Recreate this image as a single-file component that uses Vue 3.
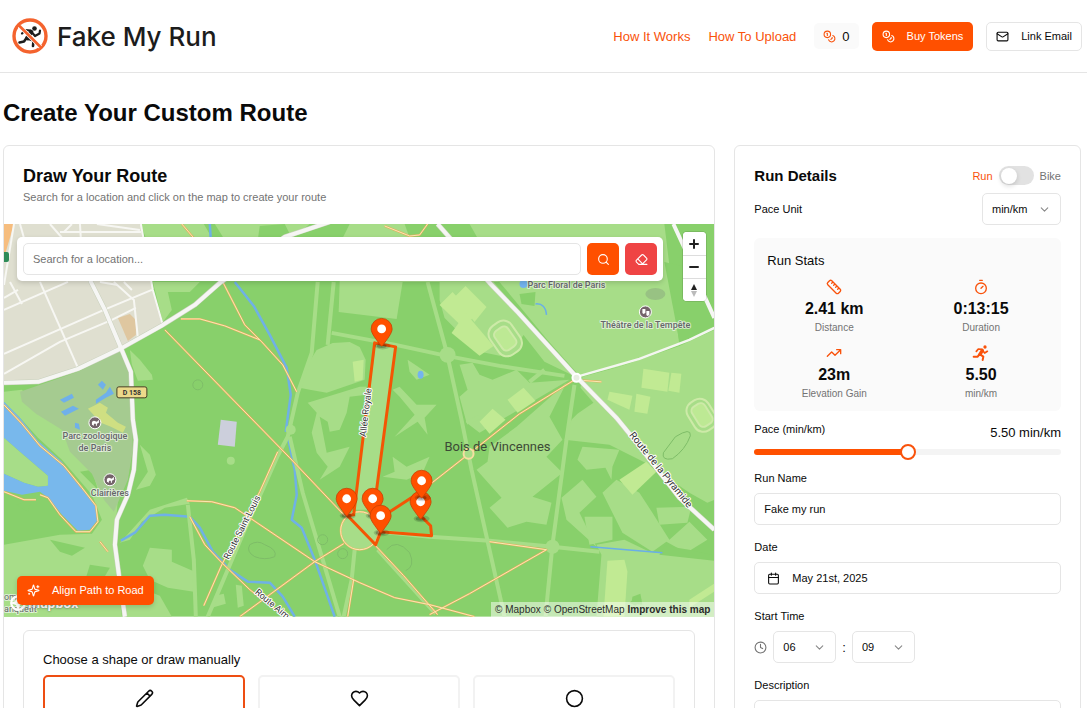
<script setup>
import { ref, computed } from "vue";

const search = ref("");
const isBike = ref(false);
const paceUnit = ref("min/km");
const pace = ref(5.5);
const runName = ref("Fake my run");
const hour = ref("06");
const minute = ref("09");
const description = ref("");
const shape = ref("pencil");

const paceMin = 3;
const paceMax = 8;
const paceFill = computed(() => ((pace.value - paceMin) / (paceMax - paceMin)) * 100 + "%");

const shapes = ["pencil", "heart", "circle"];

const stats = [
  { icon: "ruler", value: "2.41 km", label: "Distance" },
  { icon: "timer", value: "0:13:15", label: "Duration" },
  { icon: "trend", value: "23m", label: "Elevation Gain" },
  { icon: "runner", value: "5.50", label: "min/km" },
];

// waypoints, at the centre of each pin head
const pins = [
  [382, 329],
  [421, 502],
  [422, 481],
  [347, 499],
  [373, 499],
  [381, 516],
];

const parks = [
  "141,224 204,224 211,236 222,250 150,250",
  "153,282 200,282 190,292 168,292 172,310 163,322",
  "215,224 260,224 310,224 290,240 225,240",
  "350,224 445,224 500,282 340,282 342,240",
  "340,282 403,282 397,319 339,312",
  "450,224 665,224 672,282 680,345 660,351 620,367 580,376 548,340 505,288",
  "440,282 494,282 574,376 545,362 524,335 514,350 500,356 482,352 462,335 445,318 440,300",
  "130,350 140,360 152,375 153,380 138,381 132,365",
  "317,350 333,343 350,342 360,347 366,360 365,380 327,393 310,390 300,388 307,366",
  "376,345 395,347 375,510 355,510",
  "308,403 360,387 367,387 367,395 350,397 347,413 340,430 330,432 328,422 320,417 322,427 327,453 350,447 340,467 320,480 328,467 317,453 312,433 317,413",
  "393,390 400,387 417,405 437,405 425,418 428,435 418,422 395,437 415,415 400,397",
  "393,457 407,467 430,457 423,473 407,480 383,477 395,472",
  "408,360 417,366 430,375 417,380 410,372",
  "4,392 22,390 40,412 75,440 100,470 118,500 114,545 122,617 4,617 4,545 60,535 92,534 102,520 92,495 62,460 38,438 20,418 4,402",
  "4,438 20,452 48,476 48,486 38,487 24,483 4,474",
  "140,445 150,455 156,475 150,486 136,490 148,472",
  "120,543 150,510 187,498 190,504 165,508 142,522 130,540",
  "150,548 172,550 172,562 195,572 194,592 168,588 150,580 143,566",
  "125,590 140,588 160,596 172,617 126,617",
  "215,596 224,594 226,604 212,608",
  "236,585 242,586 244,606 238,608",
  "460,365 473,363 480,375 493,380 517,370 530,383 570,380 480,433 467,423 460,397 468,390",
  "490,447 517,427 567,383 550,417 563,440 547,457 563,473 533,497 552,503 547,525 527,522 508,528 490,508 502,498 477,470 488,462",
  "583,377 620,367 680,346 715,330 715,500 708,503 690,493 650,465 610,445 565,440 572,420 578,414 594,403 581,388",
  "583,447 620,450 613,467 612,480 606,468 587,470 578,460",
  "562,498 583,480 597,497 580,513 597,547 567,520",
  "585,517 613,517 613,540 590,545",
  "603,493 617,480 640,493 653,513 670,540 690,522 708,540 687,553 667,542 653,552 623,533 613,513",
  "657,508 692,507 688,523 660,525",
  "597,545 625,540 650,552 715,560 715,617 597,617 602,555",
];

const woods = [
  "260,226 285,224 292,238 258,240",
  "405,224 470,224 478,238 410,238",
  "665,262 700,270 715,318 715,330 680,341",
  "520,294 536,292 535,306 522,304",
  "50,540 85,548 72,556 60,552",
  "80,472 92,470 98,490 88,480",
  "90,565 110,568 100,585 86,578",
  "665,546 690,550 715,556 715,561 660,555",
  "640,595 642,600 636,606 630,603",
  "633,597 641,594 643,605 632,604",
  "16,505 32,500 28,512",
];

const pitches = [
  "466,286 487,307 475,322 455,297",
  "453,292 475,316 464,328 440,305",
  "466,313 494,346 480,356 452,333",
  "353,362 364,360 363,380 355,382",
  "524,388 536,401 518,413 508,400",
  "493,409 506,420 490,434 480,422",
  "644,369 670,373 668,392 642,388",
  "672,373 682,374 680,393 669,391",
  "610,392 633,396 630,410 608,400",
  "637,394 651,397 648,414 635,412",
  "620,480 647,462 657,472 633,495",
  "608,561 625,560 628,572 625,617 604,617",
  "690,600 715,584 715,592 690,608",
];

const streets = [
  "14,224 4,285",
  "20,224 24,238",
  "50,224 64,240",
  "64,232 72,224",
  "60,232 141,232",
  "80,224 81,240",
  "97,224 140,230",
  "4,310 68,282",
  "4,298 18,290",
  "10,282 22,304",
  "40,282 78,368",
  "4,354 104,310 152,290",
  "4,374 60,342 112,320 136,308",
  "100,282 118,285",
  "114,282 134,300 138,338",
  "124,282 132,290",
  "141,224 153,290 163,325",
];

const tracks = [
  "165,330 290,458 345,516",
  "181,319 200,319 225,326 260,340",
  "223,282 245,325 262,342 283,365 297,392",
  "187,501 212,502 235,508 315,562 360,583 395,598 430,605 475,617",
  "278,452 260,492 222,565 204,606",
  "190,517 205,545 222,563 250,590 285,617",
  "240,617 315,562 344,544",
  "374,544 404,576 438,615",
  "430,615 470,594 547,550 490,542",
  "421,492 472,452 520,414 575,380 602,382",
  "354,580 348,617",
  "4,405 22,424 40,446 64,466 82,488 96,506 98,522 90,532 76,532 60,515 48,498 40,495",
  "4,492 24,500 36,500",
  "100,542 108,552",
  "182,224 194,238",
  "385,226 410,236 420,235 428,224",
];

const trails = [
  "428,282 447,352 462,420 472,470 505,617",
  "332,333 396,345 447,356 500,366 565,376",
  "530,382 545,370",
  "467,423 480,417",
  "575,385 567,440 553,545 546,617",
  "382,532 430,537 490,541 553,547 600,552",
  "318,282 312,353 298,393 288,437 278,456 245,530 208,617",
  "334,282 328,345",
  "290,437 303,493 340,617",
  "355,550 352,580 344,617",
  "378,550 436,614",
  "188,505 194,560 196,617",
];

const waters = [
  "210,224 211,240",
  "235,282 254,306 270,335 287,368 291,395 286,432",
  "288,437 295,470 297,495 292,520 302,528 315,560 335,617",
  "121,541 135,533 150,516 165,515 190,517 200,528 213,552 230,570 248,582 270,583 283,597 295,617",
];
</script>

<template>
  <div class="page">
    <header class="header">
      <a href="#" class="brand">
        <svg class="brand-mark" viewBox="0 0 36 36" aria-hidden="true">
          <g fill="none" stroke="#1c1c1c" stroke-linecap="round" stroke-linejoin="round">
            <circle cx="22.5" cy="10.5" r="2.3" fill="#1c1c1c" stroke="none" />
            <path d="M19 14l-3.5 6" stroke-width="4.6" />
            <path d="M18 12.5l-4.5-.5-3.5 3.5M20 14.5l3 3.5 4.500-2.500.5-3" stroke-width="2.200" />
            <path d="M15.500 20.500l6 2-.5 5.500M14.500 20l-2.500 3.500-4.500 1" stroke-width="2.600" />
          </g>
          <circle cx="18" cy="18" r="16" fill="none" stroke="#f4632e" stroke-width="3.4" />
          <path d="M7.500 8l21 21" stroke="#fff" stroke-width="4.200" />
          <path d="M6.500 7l23 23" stroke="#f4632e" stroke-width="2.600" />
        </svg>
        <span class="brand-name">Fake My Run</span>
      </a>
      <nav class="nav">
        <a href="#how">How It Works</a>
        <a href="#upload">How To Upload</a>
        <div class="tokens">
          <svg class="icon" viewBox="0 0 24 24"><circle cx="8" cy="8" r="6" /><path d="M18.090 10.370A6 6 0 1 1 10.340 18M7 6h1v4M16.710 13.880l.7.710-2.820 2.820" /></svg>
          <span>0</span>
        </div>
        <button class="btn btn-primary">
          <svg class="icon" viewBox="0 0 24 24"><circle cx="8" cy="8" r="6" /><path d="M18.090 10.370A6 6 0 1 1 10.340 18M7 6h1v4M16.710 13.880l.7.710-2.820 2.820" /></svg>
          Buy Tokens
        </button>
        <button class="btn btn-outline">
          <svg class="icon" viewBox="0 0 24 24"><rect x="2" y="4" width="20" height="16" rx="2" /><path d="m22 7-8.970 5.700a1.940 1.940 0 0 1-2.060 0L2 7" /></svg>
          Link Email
        </button>
      </nav>
    </header>

    <main class="main">
      <h1>Create Your Custom Route</h1>

      <div class="columns">
        <section class="card route-card">
          <div class="card-head">
            <h2>Draw Your Route</h2>
            <p>Search for a location and click on the map to create your route</p>
          </div>

          <div class="map">
            <svg class="map-canvas" viewBox="4 224 711 393" preserveAspectRatio="xMidYMid slice">
              <rect x="4" y="224" width="711" height="393" fill="#88d06b" />
              <polygon v-for="p in parks" :key="p" :points="p" fill="#a7dd88" />
              <polygon v-for="p in woods" :key="p" :points="p" fill="#88d06b" />
              <polygon points="20,392 78,372 120,350 131,378 133,450 128,480 114,512 104,500 92,474 70,452 62,430 36,414 22,402" fill="#a5cb90" />
              <polygon v-for="p in pitches" :key="p" :points="p" fill="#c1ea93" />
              <polygon points="4,224 141,224 153,290 163,325 122,348 78,369 38,382 4,383" fill="#dfdfd0" />
              <polygon points="4,224 14,224 4,258" fill="#f6bd7e" />
              <polygon points="118,318 130,314 136,320 136,335 128,341" fill="#dfc7a0" />
              <polygon points="221,420 237,422 235,447 218,445" fill="#cccfdc" />
              <ellipse cx="656" cy="294" rx="10" ry="6" fill="#98c283" />

              <!-- lake, ponds and streams -->
              <path d="M4 402L20 418 38 441 62 462 80 486 95 505 98 520 90 530 78 531 62 515 48 498 40 492 22 495 4 491V474L24 483 38 487 48 486 48 476 20 452 4 438Z" fill="#78b8ec" />
              <path d="M98 385l4-4 4 4-3 5zM60 400l12-6 2 4-10 5zM61 412l12-6 6 3-14 7zM96 400l10-7 4-6 4 7-8 4-10 6zM75 423l4 1 1 6-5-2z" fill="#6fb0ea" />
              <path d="M88 409l12-6 8 5-2 5 12 10 8 4-3 6-12-6-10-4z" fill="#cfdf82" />
              <ellipse cx="421" cy="375" rx="3" ry="4" fill="#74b4ef" />
              <circle cx="524" cy="284" r="4" fill="#74b4ef" />
              <path d="M536 304q10-1 11 11M591 547l72 6" fill="none" stroke="#69aee8" stroke-width="1.500" />
              <polyline v-for="p in waters" :key="p" :points="p" class="water" />

              <polyline v-for="p in trails" :key="p" :points="p" class="trail" />
              <circle cx="553" cy="547" r="7" fill="#a7dd88" />
              <circle cx="448" cy="355" r="8" fill="#a7dd88" />
              <circle cx="291" cy="430" r="5" fill="#a7dd88" />
              <circle cx="231" cy="461" r="4" fill="#a7dd88" />
              <g fill="none" stroke="#cdeaa8" stroke-width="2">
                <rect x="493" y="321" width="26" height="35" rx="10" transform="rotate(-35 506 339)" fill="#a7dd88" />
                <rect x="498" y="327" width="16" height="23" rx="5" transform="rotate(-35 506 339)" fill="#bde994" />
                <rect x="690" y="399" width="24" height="33" rx="10" transform="rotate(-32 702 415)" />
                <rect x="695" y="404" width="15" height="23" rx="5" transform="rotate(-32 702 415)" fill="#bde994" />
              </g>
              <g fill="none" stroke="#7dbd67" stroke-width="1">
                <circle cx="198" cy="385" r="5" />
                <circle cx="323" cy="540" r="5" />
                <circle cx="343" cy="554" r="5" />
                <path d="M250 545q8-5 15 0 13 5 10 12-10 4-20 0-9-5-5-12zM387 550q10-12 23 3 6 14-4 18" />
                <path d="M676 437q16-10 15-1-5 14-18 23-11 2-9-6z" />
              </g>

              <!-- roads -->
              <circle cx="360" cy="531" r="19" fill="#a7dd88" stroke="#e8b765" stroke-width="2" />
              <circle cx="360" cy="531" r="19" fill="none" stroke="#fbe9b4" stroke-width="1" />
              <polyline v-for="p in tracks" :key="p" :points="p" class="track-edge" />
              <polyline v-for="p in tracks" :key="p + 'c'" :points="p" class="track" />
              <circle cx="469" cy="454" r="5" fill="#a7dd88" stroke="#f5dfa1" stroke-width="2" />
              <polyline v-for="p in streets" :key="p" :points="p" class="street" />
              <g class="road-edge">
                <path d="M4 383L38 382 78 369 122 348 163 325 195 305 220 283 285 237 330 222" />
                <path d="M81 240L91 282 105 310 121 348 131 372 133 420 136 440 134 470 128 495 117 520 115 545 119 575 125 617" />
                <path d="M438 224L491 284 518 312 577 377 617 418 635 440 680 498 715 530" />
              </g>
              <g class="road">
                <path d="M4 383L38 382 78 369 122 348 163 325 195 305 220 283 285 237 330 222" />
                <path d="M81 240L91 282 105 310 121 348 131 372 133 420 136 440 134 470 128 495 117 520 115 545 119 575 125 617" />
                <path d="M438 224L491 284 518 312 577 377 617 418 635 440 680 498 715 530" />
                <path d="M674 224L686 250 705 296 715 318" />
              </g>
              <path d="M577 377L640 359 690 340 715 328" fill="none" stroke="#f4f6f0" stroke-width="2.500" />
              <circle cx="577" cy="378" r="4" fill="#e8eee2" stroke="#fff" stroke-width="2" />

              <!-- labels -->
              <rect x="117" y="387" width="30" height="11" rx="2" fill="#ecd98a" stroke="#453d24" />
              <text x="132" y="395" class="label shield">D 158</text>
              <rect x="0" y="252" width="9" height="10" rx="2" fill="#2e8b57" />
              <g fill="#74636a" stroke="#fff" stroke-width="1">
                <circle cx="95" cy="423" r="6" />
                <circle cx="110" cy="480" r="6" />
                <circle cx="646" cy="312" r="6" />
              </g>
              <path d="M92 425v-3l2-1 3 1 2-2v3l-2 1v2h-1v-2h-2v2zM107 482v-3l2-1 3 1 2-2v3l-2 1v2h-1v-2h-2v2zM643 309h3v4l-2 1-1-1zM647 311h3v4l-2 1-1-1z" fill="#fff" />
              <text x="95" y="439" class="label poi">Parc zoologique</text>
              <text x="95" y="451" class="label poi">de Paris</text>
              <text x="110" y="496" class="label poi">Clairières</text>
              <text x="567" y="288" class="label poi">Parc Floral de Paris</text>
              <text x="646" y="328" class="label poi">Théâtre de la Tempête</text>
              <text x="498" y="451" class="label place">Bois de Vincennes</text>
              <text class="label street-name" transform="translate(245 529) rotate(-63)">Route Saint-Louis</text>
              <text class="label street-name wide" transform="translate(659 472) rotate(51)">Route de la Pyramide</text>
              <text class="label street-name" transform="translate(277 612) rotate(40)">Route Aimable</text>
              <text x="4" y="600" class="label edge-name">om</text>
              <text x="4" y="612" class="label edge-name">anquetit</text>

              <!-- drawn run -->
              <polyline points="347,515 376,545 381,532 432,536 431,526 421,516" class="run" />
              <polyline points="421,492 381,518 374,512 396,347 375,343 354,515 347,516" class="run" />
              <text class="label street-name" transform="translate(369 413) rotate(-83)">Allée Royale</text>
              <g v-for="[x, y] in pins" :key="x + '-' + y" :transform="`translate(${x} ${y})`">
                <ellipse cx="1" cy="17" rx="8" ry="3.500" fill="#000" opacity="0.150" />
                <ellipse cx="0" cy="17" rx="5" ry="2" fill="#000" opacity="0.250" />
                <path d="M10.500 0C10.500 4.400 5.300 10.600 1 16.500C.4 17.300-.4 17.300-1 16.500C-5.300 10.600-10.500 4.500-10.500 0A10.500 10.500 0 0 1 10.500 0Z" fill="#ff5000" stroke="#c74102" stroke-width="0.800" />
                <circle r="4.400" fill="#fff" />
              </g>
            </svg>

            <form class="search-bar" @submit.prevent>
              <input v-model="search" type="text" placeholder="Search for a location..." aria-label="Search for a location" />
              <button class="btn btn-primary btn-square" aria-label="Search">
                <svg class="icon" viewBox="0 0 24 24"><circle cx="11" cy="11" r="8" /><path d="m21 21-4.300-4.300" /></svg>
              </button>
              <button type="button" class="btn btn-danger btn-square" aria-label="Clear route">
                <svg class="icon" viewBox="0 0 24 24"><path d="m7 21-4.300-4.300c-1-1-1-2.500 0-3.400l9.600-9.600c1-1 2.500-1 3.400 0l5.600 5.600c1 1 1 2.500 0 3.400L13 21M22 21H7M5 11l9 9" /></svg>
              </button>
            </form>

            <div class="zoom-controls">
              <button aria-label="Zoom in"><svg viewBox="0 0 22 22"><path d="M11 7v8M7 11h8" /></svg></button>
              <button aria-label="Zoom out"><svg viewBox="0 0 22 22"><path d="M7 11h8" /></svg></button>
              <button aria-label="Reset bearing">
                <svg viewBox="0 0 22 22"><path d="M8 11l3-6 3 6z" class="north" /><path d="M8 12l3 6 3-6z" class="south" /></svg>
              </button>
            </div>

            <a href="#" class="mapbox-logo">
              <svg viewBox="0 0 16 16" aria-hidden="true"><circle cx="8" cy="8" r="6" /><path d="M8 4l1 3 3 1-3 1-1 3-1-3-3-1 3-1z" /></svg>
              mapbox
            </a>

            <button class="btn btn-primary align-btn">
              <svg class="icon" viewBox="0 0 24 24"><path d="M9.940 15.500A2 2 0 0 0 8.500 14.060l-6.140-1.580a.5.500 0 0 1 0-.960L8.500 9.940A2 2 0 0 0 9.940 8.500l1.580-6.140a.5.500 0 0 1 .960 0l1.580 6.140a2 2 0 0 0 1.440 1.440l6.140 1.580a.5.500 0 0 1 0 .960l-6.140 1.580a2 2 0 0 0-1.440 1.440l-1.580 6.140a.5.500 0 0 1-.960 0zM20 3v4M22 5h-4M4 17v2M5 18H3" /></svg>
              Align Path to Road
            </button>

            <div class="attribution">
              <a href="#">© Mapbox</a>
              <a href="#">© OpenStreetMap</a>
              <a href="#" class="improve">Improve this map</a>
            </div>
          </div>

          <div class="shape-box">
            <p>Choose a shape or draw manually</p>
            <div class="shape-list">
              <button
                v-for="s in shapes"
                :key="s"
                class="shape"
                :class="{ active: shape === s }"
                :aria-label="s"
                @click="shape = s"
              >
                <svg class="icon" viewBox="0 0 24 24">
                  <path v-if="s === 'pencil'" d="M21.170 6.810a1 1 0 0 0-3.980-3.980L3.840 16.170a2 2 0 0 0-.5.830l-1.320 4.350a.5.500 0 0 0 .620.620l4.350-1.320a2 2 0 0 0 .830-.5zM15 5l4 4" />
                  <path v-else-if="s === 'heart'" d="M19 14c1.490-1.460 3-3.210 3-5.500A5.500 5.500 0 0 0 16.500 3c-1.760 0-3 .5-4.500 2-1.500-1.500-2.740-2-4.500-2A5.500 5.500 0 0 0 2 8.500c0 2.300 1.500 4.050 3 5.500l7 7Z" />
                  <circle v-else cx="12" cy="12" r="10" />
                </svg>
              </button>
            </div>
          </div>
        </section>

        <section class="card details-card">
          <div class="details-head">
            <h3>Run Details</h3>
            <label class="mode">
              <span :class="{ on: !isBike }">Run</span>
              <input v-model="isBike" type="checkbox" class="switch" />
              <span :class="{ on: isBike }">Bike</span>
            </label>
          </div>

          <div class="unit-row">
            <label for="unit">Pace Unit</label>
            <div class="select unit-select">
              <select id="unit" v-model="paceUnit">
                <option>min/km</option>
              </select>
              <svg class="icon" viewBox="0 0 24 24"><path d="m6 9 6 6 6-6" /></svg>
            </div>
          </div>

          <div class="stats">
            <h4>Run Stats</h4>
            <div class="stats-grid">
              <div v-for="stat in stats" :key="stat.label" class="stat">
                <svg class="icon" viewBox="0 0 24 24">
                  <path v-if="stat.icon === 'ruler'" d="M21.300 15.300a2.400 2.400 0 0 1 0 3.400l-2.600 2.600a2.400 2.400 0 0 1-3.400 0L2.700 8.700a2.410 2.410 0 0 1 0-3.400l2.600-2.600a2.410 2.410 0 0 1 3.400 0ZM14.500 12.500l2-2M11.500 9.500l2-2M8.500 6.500l2-2M17.500 15.500l2-2" />
                  <g v-else-if="stat.icon === 'timer'"><path d="M10 2h4M12 14l3-3" /><circle cx="12" cy="14" r="8" /></g>
                  <path v-else-if="stat.icon === 'trend'" d="M22 7l-8.500 8.500-5-5L2 17M16 7h6v6" />
                  <g v-else>
                    <circle cx="18" cy="3" r="2.500" class="solid" />
                    <path d="M14 8l-3.500 6" stroke-width="5" />
                    <path d="M13 6.500L8 6 5 9.500M15 9l2.500 3 4-2.500" stroke-width="2.600" />
                    <path d="M11 14.500l4.500 3-1 5M9.500 14l-2.500 3.500H1" stroke-width="3" />
                  </g>
                </svg>
                <strong>{{ stat.value }}</strong>
                <small>{{ stat.label }}</small>
              </div>
            </div>
          </div>

          <div class="pace">
            <div class="pace-head">
              <label for="pace">Pace (min/km)</label>
              <span>{{ pace.toFixed(2) }} min/km</span>
            </div>
            <input id="pace" v-model.number="pace" type="range" :min="paceMin" :max="paceMax" step="0.05" :style="{ '--fill': paceFill }" />
          </div>

          <div class="field">
            <label for="name">Run Name</label>
            <input id="name" v-model="runName" type="text" />
          </div>

          <div class="field">
            <label for="date">Date</label>
            <button id="date" class="date-btn">
              <svg class="icon" viewBox="0 0 24 24"><path d="M8 2v4M16 2v4M3 10h18" /><rect x="3" y="4" width="18" height="18" rx="2" /></svg>
              May 21st, 2025
            </button>
          </div>

          <div class="field">
            <label for="hour">Start Time</label>
            <div class="time-row">
              <svg class="icon clock" viewBox="0 0 24 24"><circle cx="12" cy="12" r="10" /><path d="M12 6v6l4 2" /></svg>
              <div class="select">
                <select id="hour" v-model="hour">
                  <option>06</option>
                </select>
                <svg class="icon" viewBox="0 0 24 24"><path d="m6 9 6 6 6-6" /></svg>
              </div>
              <span>:</span>
              <div class="select">
                <select v-model="minute" aria-label="Minute">
                  <option>09</option>
                </select>
                <svg class="icon" viewBox="0 0 24 24"><path d="m6 9 6 6 6-6" /></svg>
              </div>
            </div>
          </div>

          <div class="field">
            <label for="description">Description</label>
            <textarea id="description" v-model="description" rows="4"></textarea>
          </div>
        </section>
      </div>
    </main>
  </div>
</template>

<style>
body {
  margin: 0;
  background: #fff;
}
</style>

<style scoped>
.page {
  font-family: "Liberation Sans", Arial, sans-serif;
  font-size: 13px;
  color: #0a0a0a;
}

.page *,
.page *::before {
  box-sizing: border-box;
}

h1, h2, h3, h4, p {
  margin: 0;
}

button, input, select, textarea {
  font: inherit;
  color: inherit;
}

button {
  cursor: pointer;
}

a {
  text-decoration: none;
  color: inherit;
}

.icon {
  width: 13px;
  height: 13px;
  flex-shrink: 0;
  fill: none;
  stroke: currentColor;
  stroke-width: 2;
  stroke-linecap: round;
  stroke-linejoin: round;
}

/* Header */
.header {
  display: flex;
  align-items: center;
  justify-content: space-between;
  height: 73px;
  padding: 0 5px 0 12px;
  border-bottom: 1px solid #e5e5e5;
}

.brand {
  display: flex;
  align-items: center;
  gap: 9px;
}

.brand-mark {
  width: 36px;
  height: 36px;
}

.brand-name {
  font-family: Inter, sans-serif;
  font-size: 26px;
  font-weight: 500;
  color: #1c1c1c;
}

.nav {
  display: flex;
  align-items: center;
  gap: 13px;
}

.nav > a {
  color: #f9520b;
  margin-right: 5px;
}

.tokens {
  display: flex;
  align-items: center;
  gap: 6px;
  padding: 0 9px;
  height: 26px;
  border-radius: 5px;
  background: #fafafa;
}

.tokens .icon {
  color: #f9520b;
}

/* Buttons */
.btn {
  display: flex;
  align-items: center;
  gap: 12px;
  height: 29px;
  padding: 0 9px;
  border: 1px solid transparent;
  border-radius: 5px;
  font-size: 11px;
}

.btn-primary {
  background: #ff5000;
  color: #fff;
}

.btn-outline {
  background: #fff;
  border-color: #e5e5e5;
}

.btn-danger {
  background: #ef4444;
  color: #fff;
}

.btn-square {
  width: 32px;
  height: 32px;
  justify-content: center;
  padding: 0;
}

/* Layout */
.main {
  padding: 25px 6px 25px 3px;
}

h1 {
  font-size: 24px;
  line-height: 30px;
  margin-bottom: 17px;
}

.columns {
  display: grid;
  grid-template-columns: repeat(3, minmax(0, 1fr));
  gap: 19px;
  align-items: start;
}

.card {
  border: 1px solid #e5e5e5;
  border-radius: 6px;
  background: #fff;
}

.route-card {
  grid-column: span 2;
}

.card-head {
  padding: 19px 19px 17px;
}

h2 {
  font-size: 18px;
  line-height: 23px;
}

.card-head p {
  color: #737373;
  font-size: 11px;
  line-height: 19px;
}

/* Map */
.map {
  position: relative;
  aspect-ratio: 711 / 393;
  overflow: hidden;
}

.map-canvas {
  display: block;
  width: 100%;
  height: 100%;
}

.map-canvas polyline {
  fill: none;
  stroke-linejoin: round;
}

.water {
  stroke: #6fb1e6;
  stroke-width: 2.5;
}

.trail {
  stroke: #a7dd88;
  stroke-width: 4;
}

.track-edge {
  stroke: #e3ae5c;
  stroke-width: 2;
}

.track {
  stroke: #fbe9b4;
  stroke-width: 1;
}

.street {
  stroke: #f7f7f3;
  stroke-width: 2;
}

.road,
.road-edge {
  fill: none;
  stroke: #f6f6f4;
  stroke-width: 4;
  stroke-linejoin: round;
}

.road-edge {
  stroke: #c9d1bd;
  stroke-width: 5;
}

.run {
  stroke: #f45504;
  stroke-width: 3;
}

.label {
  font-family: Roboto, sans-serif;
  fill: #333;
  stroke: rgba(255, 255, 255, 0.6);
  stroke-width: 2;
  paint-order: stroke;
  stroke-linejoin: round;
  text-anchor: middle;
}

.poi {
  font-size: 9px;
  font-weight: 500;
  fill: #65666a;
}

.place {
  font-size: 13px;
  fill: #3c4a36;
  stroke: none;
}

.street-name {
  font-size: 9px;
  stroke: #fff;
}

.wide {
  font-size: 10px;
}

.edge-name {
  font-size: 9px;
  text-anchor: start;
  fill: #65666a;
}

.shield {
  font-size: 7px;
  font-weight: 700;
  stroke: none;
}

.search-bar {
  position: absolute;
  top: 13px;
  left: 13px;
  right: 51px;
  display: flex;
  gap: 6px;
  padding: 6px;
  border-radius: 5px;
  background: #fff;
  box-shadow: 0 2px 5px rgba(0, 0, 0, 0.15);
}

.search-bar input {
  flex: 1;
  min-width: 0;
  padding: 0 9px;
  border: 1px solid #e5e5e5;
  border-radius: 5px;
  font-size: 11px;
}

.search-bar input::placeholder {
  color: #737373;
  opacity: 1;
}

.zoom-controls {
  position: absolute;
  top: 8px;
  right: 8px;
  display: flex;
  flex-direction: column;
  border-radius: 4px;
  overflow: hidden;
  background: #fff;
  box-shadow: 0 0 0 1px rgba(0, 0, 0, 0.1);
}

.zoom-controls button {
  width: 23px;
  height: 23px;
  padding: 0;
  border: 0;
  background: #fff;
}

.zoom-controls button + button {
  border-top: 1px solid #ddd;
}

.zoom-controls svg {
  display: block;
  width: 22px;
  height: 22px;
  fill: none;
  stroke: #222;
  stroke-width: 2;
  stroke-linecap: round;
}

.zoom-controls .north {
  fill: #222;
  stroke: none;
}

.zoom-controls .south {
  fill: #bbb;
  stroke: none;
}

.mapbox-logo {
  position: absolute;
  left: 5px;
  bottom: 5px;
  display: flex;
  align-items: center;
  gap: 1px;
  font-family: Roboto, sans-serif;
  font-size: 14px;
  line-height: 18px;
  font-weight: 700;
  color: #fff;
  text-shadow: 0 0 2px #555;
}

.mapbox-logo svg {
  width: 18px;
  height: 18px;
  fill: none;
  stroke: #fff;
  stroke-width: 2;
}

.align-btn {
  position: absolute;
  left: 13px;
  bottom: 12px;
  box-shadow: 0 2px 5px rgba(0, 0, 0, 0.15);
}

.attribution {
  position: absolute;
  right: 0;
  bottom: 0;
  display: flex;
  gap: 3px;
  padding: 0 4px;
  background: rgba(255, 255, 255, 0.5);
  font-size: 10px;
  line-height: 15px;
  color: #2c2c2c;
}

.improve {
  font-weight: 700;
}

/* Shape picker */
.shape-box {
  margin: 13px 19px 19px;
  padding: 19px;
  border: 1px solid #e5e5e5;
  border-radius: 6px;
}

.shape-box p {
  line-height: 20px;
  margin-bottom: 5px;
}

.shape-list {
  display: grid;
  grid-template-columns: repeat(3, 1fr);
  gap: 13px;
}

.shape {
  display: flex;
  justify-content: center;
  padding: 12px;
  height: 64px;
  border: 2px solid #f2f2f2;
  border-radius: 5px;
  background: #fff;
}

.shape.active {
  border-color: #ee4e12;
}

.shape .icon {
  width: 19px;
  height: 19px;
}

/* Run details */
.details-card {
  padding: 18px 19px 19px;
  font-size: 11px;
}

.details-head,
.unit-row,
.pace-head {
  display: flex;
  align-items: center;
  justify-content: space-between;
}

.details-head {
  height: 23px;
}

h3 {
  font-size: 15px;
}

.mode {
  display: flex;
  align-items: center;
  gap: 6px;
  color: #737373;
}

.mode .on {
  color: #f9520b;
}

.switch {
  appearance: none;
  width: 35px;
  height: 19px;
  margin: 0;
  padding: 2px;
  border-radius: 10px;
  background: #e2e2e2;
}

.switch::before {
  content: "";
  display: block;
  width: 16px;
  height: 16px;
  border-radius: 50%;
  background: #fff;
  box-shadow: 0 2px 5px rgba(0, 0, 0, 0.15);
}

.switch:checked::before {
  margin-left: 15px;
}

.unit-row {
  margin: 6px 0 13px;
}

.select {
  position: relative;
  width: 63px;
}

.unit-select {
  width: 79px;
}

.select select {
  appearance: none;
  width: 100%;
  height: 32px;
  padding: 0 9px;
  border: 1px solid #e5e5e5;
  border-radius: 5px;
  background: #fff;
}

.select .icon {
  position: absolute;
  top: 10px;
  right: 10px;
  color: #888;
  pointer-events: none;
}

.stats {
  padding: 14px 13px 12px;
  border-radius: 6px;
  background: #fafafa;
}

h4 {
  font-size: 13px;
  font-weight: 400;
  line-height: 18px;
  margin-bottom: 9px;
}

.stats-grid {
  display: grid;
  grid-template-columns: 1fr 1fr;
  gap: 12px 13px;
}

.stat {
  display: flex;
  flex-direction: column;
  align-items: center;
}

.stat .icon {
  width: 16px;
  height: 16px;
  color: #f9520b;
  overflow: visible;
}

.stat .solid {
  fill: currentColor;
  stroke: none;
}

.stat strong {
  font-size: 16px;
  line-height: 27px;
}

.stat small {
  font-size: 10px;
  line-height: 11px;
  color: #737373;
}

.pace-head {
  align-items: flex-start;
  margin-top: 10px;
  height: 23px;
}

.pace-head label {
  line-height: 16px;
}

.pace-head span {
  font-size: 13px;
  line-height: 24px;
}

.pace input {
  appearance: none;
  display: block;
  width: 100%;
  height: 16px;
  margin: 0;
  background: transparent;
}

.pace input::-webkit-slider-runnable-track {
  height: 6px;
  border-radius: 3px;
  background: linear-gradient(to right, #ff5000 var(--fill), #f4f4f4 var(--fill));
}

.pace input::-webkit-slider-thumb {
  appearance: none;
  width: 16px;
  height: 16px;
  margin-top: -5px;
  border: 2px solid #f9520b;
  border-radius: 50%;
  background: #fff;
}

.field {
  margin-top: 10px;
}

.field label {
  display: block;
  line-height: 17px;
  margin-bottom: 6px;
}

.field + .field {
  margin-top: 14px;
}

.field > input,
.date-btn,
textarea {
  display: flex;
  align-items: center;
  width: 100%;
  height: 32px;
  padding: 0 9px;
  border: 1px solid #e5e5e5;
  border-radius: 5px;
  background: #fff;
}

.date-btn {
  gap: 12px;
  padding: 0 12px;
}

textarea {
  height: 64px;
  resize: none;
}

.time-row {
  display: flex;
  align-items: center;
  gap: 6px;
}

.time-row > span {
  font-size: 13px;
}

.clock {
  color: #737373;
}
</style>
